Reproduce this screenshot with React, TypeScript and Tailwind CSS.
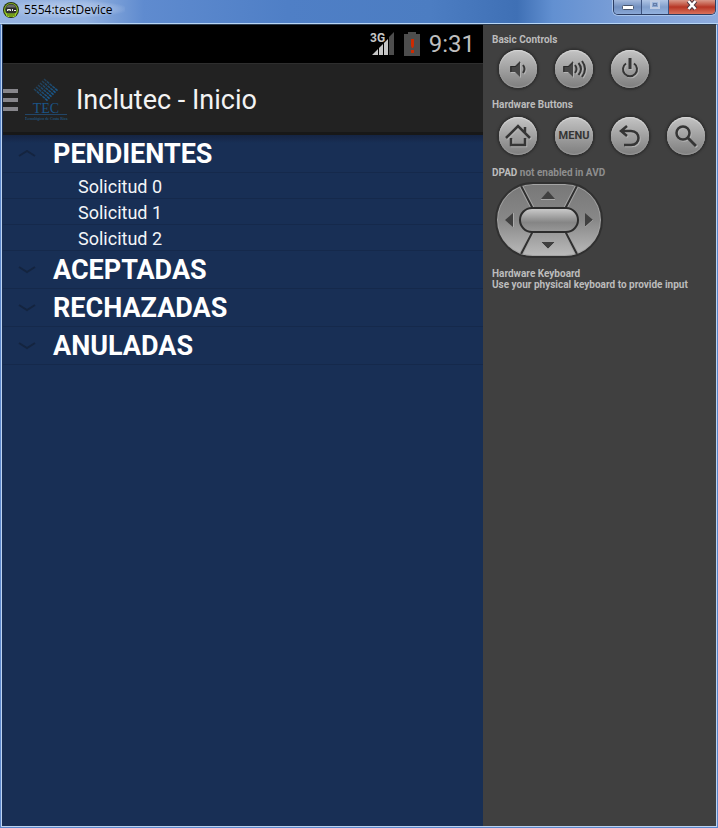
import { useState } from "react";
import type { ReactNode } from "react";

type Group = { name: string; items: string[] };

const groups: Group[] = [
  { name: "PENDIENTES", items: ["Solicitud 0", "Solicitud 1", "Solicitud 2"] },
  { name: "ACEPTADAS", items: [] },
  { name: "RECHAZADAS", items: [] },
  { name: "ANULADAS", items: [] },
];

function DeviceIcon() {
  return (
    <svg width="16" height="16" viewBox="0 0 16 16" aria-hidden="true">
      <circle cx="8" cy="8" r="8" fill="#24300c" />
      <circle cx="8" cy="8" r="7" fill="#8fc024" />
      <circle cx="8" cy="7.5" r="5.8" fill="#2b2d2b" />
      <path d="M3 5.5a5.3 4.5 0 0 1 10 0z" fill="#686b68" />
      <path d="M3 11.5h10v2l-2 1.5H5l-2-1.5z" fill="#a4d82b" />
      <path d="M5 12v2M7 12v3M9 12v3M11 12v2" stroke="#42600d" />
      <path d="M4.500 9V7.500h3V9M6 7.500V9M9.500 7v2M11 8.500h2" stroke="#f2f2f2" fill="none" />
    </svg>
  );
}

function TitleBar() {
  return (
    <header className="flex h-6 items-start justify-between bg-[linear-gradient(90deg,#96b3e1_0%,#91b0df_12%,#5f8bcf_20%,#4f7fc6_40%,#4c7dc2_60%,#3f70b5_72%,#6290d1_77%,#7fa1d8_88%,#8eacde_100%)] shadow-[inset_0_-1px_0_#b8d6f5]">
      <div className="flex items-center gap-[5px] bg-[radial-gradient(ellipse_at_center,#bdd0ee_0%,#a9c1e799_55%,transparent_75%)] pt-[2px] pr-3 pl-[3px]">
        <DeviceIcon />
        <h1 className="text-[12px] leading-4 text-black">5554:testDevice</h1>
      </div>
      <div className="mr-[2px] flex h-[15px] overflow-hidden rounded-b-[5px] border border-t-0 border-[#2c3d62] shadow-[0_0_0_1px_#a9c5eb]">
        <button aria-label="Minimizar" className="flex w-7 justify-center border-r border-[#3d5480] bg-linear-to-b from-[#a4b9dc] via-[#718fbf] to-[#8aa8d7]">
          <svg width="14" height="14" aria-hidden="true"><rect x="1.500" y="5.500" width="11" height="4" rx="1" fill="#fff" stroke="#49566d" /></svg>
        </button>
        <button aria-label="Maximizar" className="flex w-[27px] justify-center border-r border-[#3d5480] bg-linear-to-b from-[#b0c5e5] via-[#819fcc] to-[#93b2df]">
          <svg width="12" height="14" aria-hidden="true"><rect x="2" y="1" width="8" height="7" fill="none" stroke="#bfcce3" strokeWidth="2" /><rect x="4.500" y="3.500" width="3" height="2" fill="none" stroke="#657da8" /></svg>
        </button>
        <button aria-label="Cerrar" className="flex w-[46px] justify-center bg-linear-to-b from-[#d9988a] via-[#b63424] to-[#d9715c]">
          <svg width="14" height="14" aria-hidden="true"><path d="M3.500 1l7 8M10.500 1l-7 8" stroke="#513741" strokeWidth="4.500" /><path d="M3.500 1l7 8M10.500 1l-7 8" stroke="#fff" strokeWidth="2.500" /></svg>
        </button>
      </div>
    </header>
  );
}

function StatusBar() {
  return (
    <div className="flex h-[39px] items-center justify-end border-b border-[#2e2e2e] bg-black pr-2">
      <svg width="26" height="26" viewBox="0 0 26 26" role="img" aria-label="3G">
        <path d="M2 24L8 18V24zM9 24V17L13 13V24z" fill="#c6c6c6" />
        <path d="M14 24V12L18 8V24z" fill="#c6c6c6" />
        <path d="M19 24V6L24 1V24z" fill="#4d4d4d" />
        <text x="0" y="11" className="fill-[#c6c6c6] font-['Roboto',sans-serif] text-[12px] font-bold">3G</text>
      </svg>
      <svg className="ml-2" width="16" height="24" viewBox="0 0 16 24" aria-hidden="true">
        <path d="M0 2h4V0h8v2h4v22H0z" fill="#4d4d4d" />
        <path d="M7 7h3v7l-1 2H8l-1-2zM7 18h3v3H7z" fill="#cc2a00" />
      </svg>
      <time className="ml-[9px] text-[24px] leading-8 text-[#bebebe]">9:31</time>
    </div>
  );
}

function TecLogo() {
  const stripes = [0, 1, 2, 3, 4, 5];
  return (
    <svg width="43" height="44" viewBox="0 0 43 44" role="img" aria-label="TEC Tecnológico de Costa Rica">
      <defs>
        <linearGradient id="tec" x1="8" y1="0" x2="26" y2="25" gradientUnits="userSpaceOnUse">
          <stop offset="0" stopColor="#26323c" />
          <stop offset="1" stopColor="#1461a0" />
        </linearGradient>
      </defs>
      {stripes.map((stripe) => (
        <path
          key={stripe}
          d={`M${19 - stripe * 2} ${1 + stripe * 2}l14 12`}
          stroke="url(#tec)"
          strokeWidth="1.500"
          strokeDasharray="3 0.700"
        />
      ))}
      <text x="21" y="35" textAnchor="middle" className="fill-[#1b5588] font-['Liberation_Serif',serif] text-[14px]">TEC</text>
      <path d="M0 36.500h42" stroke="#224668" />
      <text x="21" y="42" textAnchor="middle" className="fill-[#24669b] font-['Liberation_Serif',serif] text-[4px]">Tecnológico de Costa Rica</text>
    </svg>
  );
}

function ActionBar() {
  return (
    <div className="flex h-[71px] items-center border-b-[3px] border-[#181818] bg-[#222222] pt-[3px]">
      <button aria-label="Menú" className="flex w-[15px] flex-col gap-[5px]">
        <span className="h-1 w-full bg-[#87868b]" />
        <span className="h-1 w-full bg-[#87868b]" />
        <span className="h-1 w-full bg-[#87868b]" />
      </button>
      <div className="ml-[7px]"><TecLogo /></div>
      <h2 className="ml-2 text-[27px] leading-8 text-[#f3f3f3]">Inclutec - Inicio</h2>
    </div>
  );
}

function GroupRow({ group, initiallyOpen }: { group: Group; initiallyOpen: boolean }) {
  const [open, setOpen] = useState(initiallyOpen);
  return (
    <li>
      <button
        aria-expanded={open}
        onClick={() => setOpen(!open)}
        className="flex h-[38px] w-full items-center border-b border-[#15294b] pt-px pl-[15px] text-left"
      >
        <svg width="18" height="8" viewBox="0 0 18 8" fill="none" aria-hidden="true">
          <path d={open ? "M1 6L9 1L17 6" : "M1 1L9 6L17 1"} stroke="#14243f" strokeWidth="2" />
        </svg>
        <span className="ml-[17px] text-[27px] leading-8 font-bold text-white">{group.name}</span>
      </button>
      {open && group.items.length > 0 && (
        <ul>
          {group.items.map((item) => (
            <li key={item} className="h-[26px] border-b border-[#15294b] pl-[75px] text-[18px] leading-[27px] text-[#f3f5f8]">{item}</li>
          ))}
        </ul>
      )}
    </li>
  );
}

function RoundButton({ label, children }: { label: string; children: ReactNode }) {
  return (
    <button
      aria-label={label}
      className="flex size-[38px] items-center justify-center rounded-full bg-linear-to-b from-[#c4c4c4] to-[#7e7e7e] text-[#353535] shadow-[0_0_2px_2px_#303030,inset_0_1px_1px_#d8d8d8,inset_0_-1px_1px_#999999]"
    >
      {children}
    </button>
  );
}

const iconClass = "drop-shadow-[1px_1px_0_#b4b4b4]";

function DPad() {
  return (
    <svg className="block" width="108" height="76" viewBox="0 0 108 76" role="img" aria-label="DPAD">
      <defs>
        <linearGradient id="pad" x1="0" y1="0" x2="0" y2="1">
          <stop offset="0" stopColor="#777777" />
          <stop offset="0.500" stopColor="#888888" />
          <stop offset="1" stopColor="#bcbcbc" />
        </linearGradient>
        <linearGradient id="center" x1="0" y1="0" x2="0" y2="1">
          <stop offset="0" stopColor="#cecece" />
          <stop offset="0.600" stopColor="#858585" />
          <stop offset="1" stopColor="#999999" />
        </linearGradient>
        <clipPath id="padShape">
          <rect x="2" y="2" width="104" height="72" rx="36" />
        </clipPath>
      </defs>
      <rect x="1" y="1" width="106" height="74" rx="37" fill="url(#pad)" />
      <g clipPath="url(#padShape)">
        <rect x="2.500" y="2.500" width="103" height="71" rx="35.500" fill="none" stroke="#a4a4a4" />
        <path d="M24 0L38 27M84 0L70 27M24 76L38 49M84 76L70 49" stroke="#a4a4a4" strokeWidth="4" />
        <path d="M24 0L38 27M84 0L70 27M24 76L38 49M84 76L70 49" stroke="#303030" strokeWidth="2" />
      </g>
      <rect x="1" y="1" width="106" height="74" rx="37" fill="none" stroke="#303030" strokeWidth="2" />
      <rect x="25" y="26" width="58" height="24" rx="12" fill="url(#center)" stroke="#2c2c2c" strokeWidth="2" />
      <path d="M46 17L53 9L60 17zM46 60L53 67L60 60zM18 31L10 38L18 45z" fill="#404040" />
      <path d="M90 31L98 38L90 45z" fill="#404040" />
      <path d="M46 17.500h14M18.500 31v14M46 60l7 7l7-7M90 45l8-7" fill="none" stroke="#b7b7b7" strokeWidth="0.700" />
    </svg>
  );
}

function ControlPanel() {
  return (
    <aside className="w-[233px] shrink-0 bg-[#404040] pt-[9px] pl-[9px] text-[10px] leading-[11px] font-bold text-[#bcbcbc]">
      <h3>Basic Controls</h3>
      <div className="mt-[5px] ml-[7px] flex gap-[18px]">
        <RoundButton label="Bajar volumen">
          <svg className={iconClass} width="20" height="20" viewBox="0 0 20 20" fill="none" aria-hidden="true">
            <path d="M2 7h5l5-5v16l-5-5H2z" fill="#464646" /><path d="M3 13V7.500h5l4-4" stroke="#292929" /><path d="M15 6q3 4 0 8" stroke="#353535" strokeWidth="2" />
          </svg>
        </RoundButton>
        <RoundButton label="Subir volumen">
          <svg className={iconClass} width="26" height="20" viewBox="0 0 26 20" fill="none" aria-hidden="true">
            <path d="M2 7h5l5-5v16l-5-5H2z" fill="#464646" /><path d="M3 13V7.500h5l4-4" stroke="#292929" /><path d="M14 6q3 4 0 8M17.500 4q5 6 0 12M21 2q6 8 0 16" stroke="#353535" strokeWidth="2" />
          </svg>
        </RoundButton>
        <RoundButton label="Encendido">
          <svg className={iconClass} width="20" height="22" viewBox="0 0 20 22" fill="none" stroke="currentColor" strokeWidth="2" aria-hidden="true">
            <path d="M6 5.500a7 7 0 1 0 8 0" /><path d="M10 0v11" strokeWidth="3" />
          </svg>
        </RoundButton>
      </div>
      <h3 className="mt-[11px]">Hardware Buttons</h3>
      <div className="mt-[7px] ml-[7px] flex gap-[18px]">
        <RoundButton label="Inicio">
          <svg className={iconClass} width="26" height="24" viewBox="0 0 26 24" fill="none" stroke="currentColor" strokeWidth="2.500" aria-hidden="true">
            <path d="M1 14L13 2L25 14M20 9V3M6 14v7h14v-7" />
          </svg>
        </RoundButton>
        <RoundButton label="Menu">
          <span className="text-[11px] leading-3 font-bold">MENU</span>
        </RoundButton>
        <RoundButton label="Volver">
          <svg className={iconClass} width="22" height="22" viewBox="0 0 22 22" fill="none" stroke="currentColor" strokeWidth="2.500" aria-hidden="true">
            <path d="M8 1L2 6L8 11M2 6h10c10 0 10 14 0 14H5" />
          </svg>
        </RoundButton>
        <RoundButton label="Buscar">
          <svg className={iconClass} width="22" height="22" viewBox="0 0 22 22" fill="none" stroke="currentColor" strokeWidth="2.500" aria-hidden="true">
            <circle cx="8" cy="8" r="6.500" /><path d="M13 13l8 8" strokeWidth="3" />
          </svg>
        </RoundButton>
      </div>
      <h3 className="mt-3">DPAD <span className="text-[#8e8e8e]">not enabled in AVD</span></h3>
      <div className="mt-1 ml-[3px]"><DPad /></div>
      <h3 className="mt-[10px]">Hardware Keyboard</h3>
      <p>Use your physical keyboard to provide input</p>
    </aside>
  );
}

export default function App() {
  return (
    <div className="flex min-h-screen flex-col bg-[#5b87cb] font-['Open_Sans','Noto_Sans',sans-serif]">
      <TitleBar />
      <main className="mx-px mb-px flex grow border border-[#bdd4f1] border-t-[#29394d] bg-[#182f55] pl-px font-['Roboto',sans-serif]">
        <section className="min-w-0 flex-1 bg-[#182f55]">
          <StatusBar />
          <ActionBar />
          <ul className="bg-[linear-gradient(#152443_0px,#182f55_8px)]">
            {groups.map((group, index) => (
              <GroupRow key={group.name} group={group} initiallyOpen={index === 0} />
            ))}
          </ul>
        </section>
        <ControlPanel />
      </main>
    </div>
  );
}
